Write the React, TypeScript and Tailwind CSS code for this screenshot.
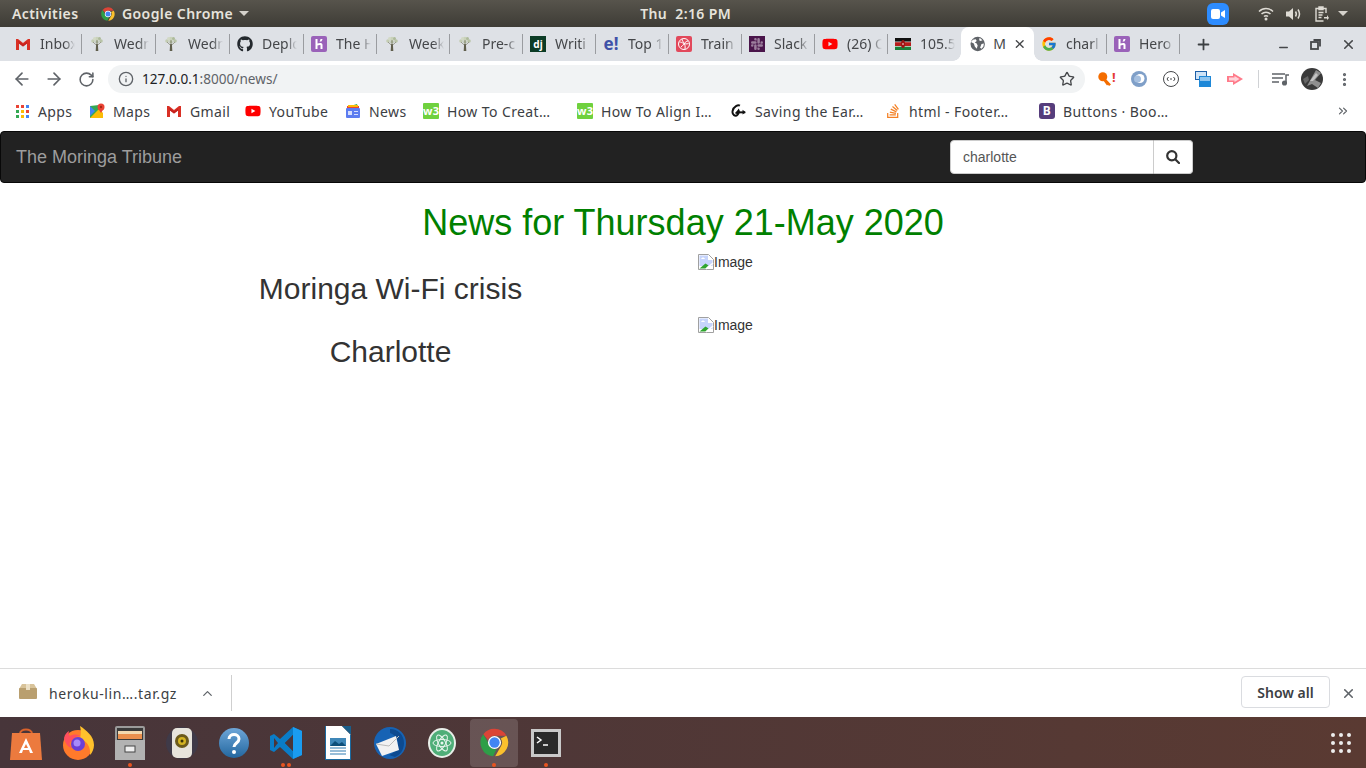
import React from 'react';
import { FaGithub, FaYoutube, FaStackOverflow } from 'react-icons/fa';
import { FcGoogle } from 'react-icons/fc';
import { SiSlack } from 'react-icons/si';
import { ArrowLeft, ArrowRight, RotateCw, Info, Star, Plus, X, Minus, ChevronUp, ChevronsRight, EllipsisVertical } from 'lucide-react';

const ui = { fontFamily: '"Noto Sans", "Open Sans", sans-serif' };

const ChromeLogo: React.FC<{ size: number }> = ({ size }) => (
  <svg width={size} height={size} viewBox="0 0 48 48">
    <path d="M24 4a20 20 0 0 1 17.3 10H24a10 10 0 0 0-9.4 6.6L7.7 12A20 20 0 0 1 24 4z" fill="#db4437" />
    <path d="M41.3 14A20 20 0 0 1 25 44l8.6-15A10 10 0 0 0 33 18z" fill="#fbc02d" />
    <path d="M7.7 12l8.6 15A10 10 0 0 0 27 33.6L22 44A20 20 0 0 1 7.7 12z" fill="#2e9e48" />
    <circle cx="24" cy="24" r="9.5" fill="#fff" />
    <circle cx="24" cy="24" r="7.5" fill="#4285f4" />
  </svg>
);

const GmailIcon = () => (
  <svg width="16" height="16" viewBox="0 0 16 16">
    <path d="M1 3h2l5 4 5-4h2v11h-3V7.500L8 10.500 4 7.500V14H1z" fill="#d93025" />
    <path d="M4 7.500L8 10.500l4-3V5.400L8 8.400 3 4.500z" fill="#c5221f" />
  </svg>
);

const TreeIcon = () => (
  <svg width="16" height="16" viewBox="0 0 16 16">
    <circle cx="4" cy="5" r="1.800" fill="#c3ccb2" />
    <circle cx="12" cy="5" r="1.800" fill="#b9c4a8" />
    <circle cx="8" cy="3" r="2.200" fill="#c9d2ba" />
    <circle cx="5.500" cy="2.500" r="1.500" fill="#d2d9c5" />
    <circle cx="10.500" cy="2.500" r="1.500" fill="#aebb9b" />
    <circle cx="8" cy="6" r="1.600" fill="#a9b596" />
    <path d="M4 6l3.200 3M12 6L8.800 9M8 4v4" stroke="#8a8c78" strokeWidth=".8" />
    <path d="M7.100 8h1.800l.4 7H6.700z" fill="#5f5e4c" />
  </svg>
);

const HerokuIcon = () => (
  <svg width="16" height="16" viewBox="0 0 16 16">
    <rect width="16" height="16" rx="2" fill="#9a62b9" />
    <path d="M4.500 3h2v4.500c1.500-.6 5-1.400 5 1.500v4h-2V9.500c0-1-2-.4-3 0V13h-2z" fill="#fff" />
    <path d="M9.500 3h2c-.1 1-.5 1.800-1.200 2.500H8.500c.5-.7 1-1.500 1-2.500z" fill="#fff" />
  </svg>
);

const DjangoIcon = () => (
  <div className="w-4 h-4 bg-[#0c3c26] text-white text-[10px] font-bold leading-4 text-center">dj</div>
);

const EBangIcon = () => (
  <div className="w-4 h-4 text-[#3f51a8] text-[17px] font-bold leading-4 text-center">e!</div>
);

const SoloIcon = () => (
  <svg width="16" height="16" viewBox="0 0 16 16">
    <rect width="16" height="16" rx="2" fill="#e2495c" />
    <circle cx="8" cy="8" r="5.500" fill="none" stroke="#fff" strokeWidth="1" />
    <path d="M3.500 6c3 0 5 3 9 1.500M6 3c0 3 4 4 3 10M12 5c-3 0-4 4-7 6" fill="none" stroke="#fff" strokeWidth="1" />
  </svg>
);

const SlackIcon = () => (
  <div className="w-4 h-4 bg-[#4a154b] flex items-center justify-center">
    <SiSlack size={12} color="#9c7f9d" />
  </div>
);

const KenyaFlag = () => (
  <svg width="16" height="16" viewBox="0 0 16 16">
    <rect y="2" width="16" height="4" fill="#111" />
    <rect y="6" width="16" height="4.500" fill="#b71c1c" />
    <rect y="10" width="16" height="4" fill="#1b7f3a" />
    <rect y="5.600" width="16" height=".6" fill="#fff" />
    <rect y="10" width="16" height=".6" fill="#fff" />
    <ellipse cx="8" cy="8" rx="2" ry="4" fill="#9c1414" />
    <circle cx="8" cy="8" r=".8" fill="#fff" />
  </svg>
);

const GlobeIcon = () => (
  <svg width="16" height="16" viewBox="0 0 16 16">
    <circle cx="8" cy="8" r="7.500" fill="#5f6368" />
    <path d="M3 3.500L6 3l1 2-2 1.500 2 1 1 2-1 3.500-2-2.500-1-3L1 6zM10 1.500l3 2.500-2 1-1.500-1zM12 8l2.500-.5-.5 3-2 2.500-1.500-1z" fill="#fff" />
  </svg>
);

const W3Icon = () => (
  <div className="w-4 h-4 rounded-[1px] bg-[#6fd13e] text-white text-[11px] font-bold leading-[15px] text-center overflow-hidden">w3</div>
);

const AppsIcon = () => (
  <div className="grid grid-cols-3 gap-[2px] w-[13px]">
    {['#ea4335', '#ea4335', '#4285f4', '#34a853', '#fbbc05', '#ea4335', '#34a853', '#fbbc05', '#4285f4'].map((c, i) => (
      <svg key={i} width="3" height="3" viewBox="0 0 3 3">
        <rect width="3" height="3" fill={c} />
      </svg>
    ))}
  </div>
);

const MapsIcon = () => (
  <svg width="16" height="16" viewBox="0 0 16 16">
    <path d="M1 3l9-1v13H1z" fill="#34a853" />
    <path d="M1 15L10 6l4 4v5z" fill="#fbbc05" />
    <path d="M1 3l5 5-5 5z" fill="#4285f4" />
    <circle cx="12" cy="4" r="3.500" fill="#ea4335" />
    <path d="M9.500 6l2.500 4 2.500-4z" fill="#ea4335" />
    <circle cx="12" cy="4" r="1.200" fill="#a52714" />
  </svg>
);

const NewsIcon = () => (
  <svg width="16" height="16" viewBox="0 0 16 16">
    <path d="M2 4l10-3 1 3z" fill="#34a853" />
    <rect x="2" y="3" width="12" height="3" fill="#ea4335" />
    <rect x="3" y="2" width="10" height="2" fill="#fbbc05" />
    <rect x="1" y="5" width="14" height="10" rx="1" fill="#5c7cf0" />
    <rect x="3" y="8" width="4" height="4" fill="#d6defc" />
    <rect x="9" y="8" width="4" height="1" fill="#d6defc" />
    <rect x="9" y="11" width="4" height="1" fill="#d6defc" />
  </svg>
);

const SavingIcon = () => (
  <svg width="18" height="16" viewBox="0 0 18 16" fill="none" stroke="#111" strokeWidth="2.200">
    <path d="M10 2C8 .8 3 2.500 1.800 8c-.8 4 3 7 5.700 4 1.200-1.500 1.500-3.500 1-4.500-.6 1-2.500 2-3 3.500" />
    <path d="M7 9.500h9" />
    <path d="M13 6.500l3.500 3-3.500 2.500z" fill="#111" stroke="none" />
  </svg>
);

const BootstrapIcon = () => (
  <div className="w-4 h-4 rounded-[3px] bg-[#563d7c] text-white text-[12px] font-bold leading-4 text-center">B</div>
);

type TabItem = { icon: React.ReactNode; title: string; width: string };

const tabs: TabItem[] = [
  { icon: <GmailIcon />, title: 'Inbox', width: 'w-[74px]' },
  { icon: <TreeIcon />, title: 'Wedn', width: 'w-[74px]' },
  { icon: <TreeIcon />, title: 'Wedn', width: 'w-[74px]' },
  { icon: <FaGithub size={16} color="#24292e" />, title: 'Deplo', width: 'w-[74px]' },
  { icon: <HerokuIcon />, title: 'The H', width: 'w-[73px]' },
  { icon: <TreeIcon />, title: 'Week', width: 'w-[73px]' },
  { icon: <TreeIcon />, title: 'Pre-c', width: 'w-[73px]' },
  { icon: <DjangoIcon />, title: 'Writi', width: 'w-[73px]' },
  { icon: <EBangIcon />, title: 'Top 1', width: 'w-[73px]' },
  { icon: <SoloIcon />, title: 'Train', width: 'w-[73px]' },
  { icon: <SlackIcon />, title: 'Slack', width: 'w-[73px]' },
  { icon: <FaYoutube size={16} color="#ff0000" />, title: '(26) C', width: 'w-[73px]' },
  { icon: <KenyaFlag />, title: '105.5', width: 'w-[73px]' },
];

const Tab: React.FC<{ item: TabItem; showSep?: boolean }> = ({ item, showSep = true }) => (
  <div className={`${item.width} h-full flex items-center pl-[7px] shrink-0`}>
    <div className="w-4 flex justify-center shrink-0">{item.icon}</div>
    <span className="ml-[9px] mb-[2px] w-[35px] overflow-hidden whitespace-nowrap text-[14px] text-[#45474a] [mask-image:linear-gradient(to_right,black_70%,transparent)]">
      {item.title}
    </span>
    {showSep && <div className="ml-auto w-px h-5 bg-[#9a9ca0]" />}
  </div>
);

const bookmarks = [
  { icon: <AppsIcon />, label: 'Apps', width: 'w-[75px]' },
  { icon: <MapsIcon />, label: 'Maps', width: 'w-[77px]' },
  { icon: <GmailIcon />, label: 'Gmail', width: 'w-[79px]' },
  { icon: <FaYoutube size={16} color="#ff0000" />, label: 'YouTube', width: 'w-[100px]' },
  { icon: <NewsIcon />, label: 'News', width: 'w-[78px]' },
  { icon: <W3Icon />, label: 'How To Creat…', width: 'w-[154px]' },
  { icon: <W3Icon />, label: 'How To Align I…', width: 'w-[154px]' },
  { icon: <SavingIcon />, label: 'Saving the Ear…', width: 'w-[154px]' },
  { icon: <FaStackOverflow size={16} color="#f48024" />, label: 'html - Footer…', width: 'w-[154px]' },
  { icon: <BootstrapIcon />, label: 'Buttons · Boo…', width: 'w-[150px]' },
];

const TopBar = () => (
  <div
    className="h-[27px] flex items-center bg-gradient-to-b from-[#57544c] to-[#3e3c36] text-[#e6e3dc] text-[14px] font-semibold tracking-[0.4px] px-3 shrink-0"
    style={ui}
  >
    <span className="w-[88px]">Activities</span>
    <ChromeLogo size={16} />
    <span className="ml-[6px]">Google Chrome</span>
    <div className="ml-[6px] w-0 h-0 border-x-[5px] border-x-transparent border-t-[5px] border-t-[#d5d2cb]" />
    <div className="ml-[391px] w-[180px]">Thu&nbsp;&nbsp;2:16 PM</div>
    <div className="ml-[387px] w-[22px] h-[22px] rounded-[6px] bg-[#2d8cff] flex items-center justify-center">
      <svg width="14" height="10" viewBox="0 0 14 10">
        <rect width="9" height="10" rx="2" fill="#fff" />
        <path d="M10 3.500L14 1v8l-4-2.500z" fill="#fff" />
      </svg>
    </div>
    <svg width="16" height="14" viewBox="0 0 16 14" className="ml-[29px]" fill="none" stroke="#dedbd4" strokeWidth="1.500">
      <path d="M1 4.500c4-4 10-4 14 0M3.500 7c2.500-2.500 6.500-2.500 9 0M6 9.500c1-1 3-1 4 0" />
      <circle cx="8" cy="12" r="1.500" fill="#dedbd4" stroke="none" />
    </svg>
    <svg width="16" height="14" viewBox="0 0 16 14" className="ml-[12px]" fill="none" stroke="#dedbd4" strokeWidth="1.500">
      <path d="M0 4.500h3L7 1v12L3 9.500H0z" fill="#dedbd4" stroke="none" />
      <path d="M9.500 4.500c1 1.500 1 3.500 0 5M12 2.500c2 3 2 6 0 9" />
    </svg>
    <svg width="14" height="16" viewBox="0 0 14 16" className="ml-[13px]" fill="none" stroke="#dedbd4" strokeWidth="1.400">
      <path d="M8.500 15H1V2.500h10V7" />
      <path d="M4 1h4v2.500H4z" fill="#dedbd4" />
      <path d="M3.500 6.500h5M3.500 9h4M3.500 11.500h3" />
      <path d="M9 13h3v-2l2 3-2 2v-1.500H9z" fill="#dedbd4" stroke="none" transform="translate(0 -2)" />
    </svg>
    <div className="ml-[9px] w-0 h-0 border-x-[5px] border-x-transparent border-t-[5px] border-t-[#d5d2cb]" />
  </div>
);

const TabStrip = () => (
  <div className="h-[34px] bg-[#dee1e6] flex items-center pl-2 shrink-0" style={ui}>
    {tabs.map((t, i) => (
      <Tab key={i} item={t} showSep={i !== 12} />
    ))}
    <div className="relative w-[73px] h-full bg-white rounded-t-lg flex items-center pl-[9px] shrink-0">
      <div className="absolute bottom-0 -left-2 w-2 h-2 bg-[radial-gradient(circle_at_0_0,#dee1e6_7.5px,white_8px)]" />
      <div className="absolute bottom-0 -right-2 w-2 h-2 bg-[radial-gradient(circle_at_100%_0,#dee1e6_7.5px,white_8px)]" />
      <GlobeIcon />
      <span className="ml-2 mb-[2px] text-[14px] text-[#45474a] w-[20px] overflow-hidden">M</span>
      <X size={14} className="ml-auto mr-2 text-[#45474a]" strokeWidth={2.500} />
    </div>
    <Tab item={{ icon: <FcGoogle size={16} />, title: 'charl', width: 'w-[73px]' }} />
    <Tab item={{ icon: <HerokuIcon />, title: 'Hero', width: 'w-[73px]' }} />
    <Plus size={17} className="ml-[15px] text-[#3c4043]" strokeWidth={2.500} />
    <Minus size={13} className="ml-[65px] mt-[6px] text-[#45474a]" strokeWidth={2.500} />
    <svg width="11" height="11" viewBox="0 0 11 11" className="ml-[20px] text-[#45474a]" fill="none" stroke="currentColor" strokeWidth="1.800">
      <rect x="1" y="3" width="7" height="7" />
      <path d="M3.500 1H10v6.500" />
    </svg>
    <X size={15} className="ml-[20px] text-[#45474a]" strokeWidth={2.500} />
  </div>
);

const Toolbar = () => (
  <div className="h-[36px] bg-white flex items-center pl-[12px] shrink-0" style={ui}>
    <ArrowLeft size={20} className="text-[#5f6368]" strokeWidth={2} />
    <ArrowRight size={20} className="ml-[12px] text-[#5f6368]" strokeWidth={2} />
    <RotateCw size={17} className="ml-[14px] text-[#5f6368]" strokeWidth={2.200} />
    <div className="ml-[13px] w-[977px] h-7 rounded-full bg-[#f1f3f4] flex items-center pl-[10px] pr-[10px]">
      <Info size={16} className="text-[#5f6368]" strokeWidth={2} />
      <span className="ml-[8px] text-[13.600px] text-[#202124]">
        127.0.0.1<span className="text-[#5f6368]">:8000/news/</span>
      </span>
      <Star size={16} className="ml-auto text-[#45474a]" strokeWidth={2} />
    </div>
    <div className="ml-[13px] flex items-center text-[#f46d00] font-bold text-[13px]">
      <svg width="14" height="15" viewBox="0 0 14 15">
        <circle cx="4.800" cy="4.800" r="4.500" fill="#f46d00" />
        <path d="M7 6l6 6.500-2 1.500-1-1.200-1 .7L5 8z" fill="#f46d00" />
      </svg>
      <span className="text-[#e53935] text-[13px] leading-none -mt-1">!</span>
    </div>
    <svg width="16" height="16" viewBox="0 0 16 16" className="ml-[15px]">
      <circle cx="8" cy="8" r="8" fill="#7f9fc8" />
      <circle cx="9" cy="7.500" r="4.500" fill="#fff" />
      <circle cx="6.500" cy="8" r="3.500" fill="#a5bfdf" />
    </svg>
    <svg width="16" height="16" viewBox="0 0 16 16" className="ml-[16px]" fill="none" stroke="#45474a" strokeWidth="1">
      <circle cx="8" cy="8" r="7.500" />
      <path d="M5.500 6L4 8l1.500 2M10.500 6L12 8l-1.500 2M7 8h2" />
    </svg>
    <svg width="16" height="16" viewBox="0 0 16 16" className="ml-[16px]">
      <rect x="0" y="0" width="12" height="9" fill="#1d5fa8" />
      <rect x="1" y="1" width="10" height="7" fill="#cfe3f6" />
      <rect x="4" y="5" width="12" height="11" fill="#1e88d8" />
      <rect x="5" y="6" width="10" height="4" fill="#8fc4ee" />
    </svg>
    <svg width="16" height="14" viewBox="0 0 16 14" className="ml-[16px]">
      <path d="M0 4h6V1l10 6-10 6V10H0z" fill="#ff7b8a" />
      <path d="M2 5.500h5.500V4l5 3-5 3V8.500H2z" fill="#ffd4da" />
    </svg>
    <div className="ml-[15px] w-px h-[18px] bg-[#d0d2d5]" />
    <svg width="18" height="14" viewBox="0 0 18 14" className="ml-[13px]" fill="none" stroke="#5f6368" strokeWidth="1.500">
      <path d="M0 2h13M0 6h11M0 10h7" />
      <path d="M14 11V3h3" />
      <circle cx="12.500" cy="11" r="1.800" fill="#5f6368" />
    </svg>
    <svg width="22" height="22" viewBox="0 0 22 22" className="ml-[11px]">
      <circle cx="11" cy="11" r="11" fill="#3a3a3a" />
      <path d="M6 18L15 2l5 3-6 7 6 3-3 5-6-4z" fill="#8f8f8f" />
      <path d="M9 13l6-8 2 2-5 6z" fill="#c4c4c4" />
      <path d="M2 11l5-3 1 4-4 4z" fill="#666" />
    </svg>
    <EllipsisVertical size={17} className="ml-[13px] text-[#5f6368]" strokeWidth={2.500} />
  </div>
);

const BookmarksBar = () => (
  <div className="h-[34px] pb-[6px] bg-white flex items-center pl-[14px] shrink-0 text-[14px] tracking-[0.4px] text-[#3c4043]" style={ui}>
    {bookmarks.map((b, i) => (
      <div key={i} className={`${b.width} flex items-center shrink-0`}>
        <div className="w-4 flex justify-center shrink-0">{b.icon}</div>
        <span className="ml-2 whitespace-nowrap">{b.label}</span>
      </div>
    ))}
    <ChevronsRight size={14} className="ml-auto mr-4 text-[#5f6368]" strokeWidth={2} />
  </div>
);

const Navbar = () => (
  <nav
    className="h-[52px] bg-[#222] border border-[#080808] rounded flex items-center shrink-0"
    style={{ fontFamily: '"Liberation Sans", Arial, sans-serif' }}
  >
    <a className="ml-[15px] text-lg text-[#9d9d9d] w-[934px]">The Moringa Tribune</a>
    <div className="flex h-[34px] w-[243px]">
      <input
        readOnly
        value="charlotte"
        className="w-[204px] bg-white rounded-l border border-[#ccc] px-3 text-sm text-[#555] outline-none"
      />
      <button className="flex-1 bg-white rounded-r border border-l-0 border-[#ccc] flex items-center justify-center">
        <svg width="14" height="14" viewBox="0 0 14 14" fill="none" stroke="#333" strokeWidth="2.200">
          <circle cx="5.800" cy="5.800" r="4.600" />
          <path d="M9.200 9.200L13 13" strokeLinecap="round" />
        </svg>
      </button>
    </div>
  </nav>
);

const BrokenImage = () => (
  <div className="flex items-center text-sm text-[#333] h-5">
    <svg width="16" height="16" viewBox="0 0 16 16">
      <path d="M.5.500h10l5 5v10H.5z" fill="#fff" stroke="#a0a0a0" />
      <path d="M1.500 1.500h8.500v4.500h4.500v6H1.500z" fill="#c6d4fb" />
      <path d="M1.500 14.500l6-5 3 2-3 3z" fill="#2fa52f" />
      <path d="M3 5c1-2 3-2 4 0z" fill="#fff" />
      <path d="M8 15l7-6" stroke="#fff" strokeWidth="1.500" />
    </svg>
    <span>Image</span>
  </div>
);

const NewsRow: React.FC<{ title: string }> = ({ title }) => (
  <div className="flex h-[63px]">
    <div className="w-[585px] px-[15px] text-center">
      <h2 className="mt-5 text-[30px] leading-[33px] text-[#333]">{title}</h2>
    </div>
    <div className="w-[585px] px-[15px]">
      <BrokenImage />
    </div>
  </div>
);

const Content = () => (
  <main className="flex-1 min-h-0 bg-white" style={{ fontFamily: '"Liberation Sans", Arial, sans-serif' }}>
    <h1 className="mt-5 text-center text-4xl leading-[40px] text-[#008000]">News for Thursday 21-May 2020</h1>
    <div className="w-[1170px] mx-auto mt-[9px]">
      <NewsRow title="Moringa Wi-Fi crisis" />
      <NewsRow title="Charlotte" />
    </div>
  </main>
);

const DownloadBar = () => (
  <div className="h-[49px] bg-white border-t border-[#dcdcdc] flex items-center shrink-0 text-[#3c4043]" style={ui}>
    <svg width="18" height="16" viewBox="0 0 18 16" className="ml-[19px] mb-[2px]">
      <path d="M3 0h12l3 5H0z" fill="#d8c39a" />
      <rect y="4" width="18" height="11" rx="1" fill="#b99f6f" />
      <rect x="7" y="0" width="4" height="6" fill="#ece0c6" />
    </svg>
    <span className="ml-[12px] w-[150px] text-[14px] tracking-[0.6px] whitespace-nowrap">heroku-lin….tar.gz</span>
    <ChevronUp size={15} className="ml-px text-[#5f6368]" strokeWidth={2} />
    <div className="ml-[16px] w-px h-[36px] bg-[#cfcfcf]" />
    <button className="ml-auto mb-[2px] w-[89px] h-8 rounded border border-[#dadce0] text-[14px] font-semibold text-[#3c4043]">
      Show all
    </button>
    <X size={15} className="ml-[11px] mr-[10px] text-[#5f6368]" strokeWidth={2.500} />
  </div>
);

const dockIcons: { el: React.ReactNode; dots?: number; active?: boolean }[] = [
  {
    el: (
      <svg width="32" height="34" viewBox="0 0 32 34">
        <path d="M10 8c0-6 12-6 12 0" fill="none" stroke="#d9622b" strokeWidth="2" />
        <path d="M2 7h28l2 27H0z" fill="#ec7a3e" />
        <path d="M16 12l7 15h-3l-1-3h-6l-1 3H9zm0 6l-2 4h4z" fill="#fff" />
      </svg>
    ),
  },
  {
    el: (
      <svg width="32" height="34" viewBox="0 0 32 34">
        <circle cx="16" cy="19" r="15" fill="#ff7a2b" />
        <path d="M18 0c6 4 14 10 14 19 0 4-2 8-4 10 1-8-3-14-10-16 1-5 1-9 0-13z" fill="#ffc12c" />
        <path d="M2 12c1-4 3-6 5-7-1 3 0 4 1 5 3-2 7-2 10 0-4 0-6 2-6 4l-4 2c-1 2 0 5 3 6-5 0-8-5-9-10z" fill="#ff4f5e" />
        <circle cx="16" cy="18" r="7" fill="#6b3fd4" />
        <circle cx="15" cy="17" r="3.500" fill="#a78bfa" />
      </svg>
    ),
  },
  {
    el: (
      <svg width="30" height="34" viewBox="0 0 30 34">
        <rect width="30" height="34" rx="2" fill="#9b9b9b" />
        <rect x="2" y="2" width="26" height="12" fill="#3a3a3a" />
        <rect x="3" y="5" width="24" height="3" fill="#f2d8b0" />
        <rect x="3" y="8" width="24" height="5" fill="#e98f4e" />
        <rect x="0" y="14" width="30" height="20" fill="#b2b2b2" />
        <rect x="10" y="20" width="10" height="6" fill="#eee" stroke="#444" />
      </svg>
    ),
    dots: 1,
  },
  {
    el: (
      <svg width="32" height="34" viewBox="0 0 32 34">
        <circle cx="16" cy="17" r="16" fill="#3f3a48" />
        <rect x="6" y="2" width="20" height="30" rx="5" fill="#e7e4dc" />
        <circle cx="16" cy="15" r="7" fill="#6b5a1c" />
        <circle cx="16" cy="15" r="4" fill="#d4b422" />
        <circle cx="16" cy="15" r="1.500" fill="#3b3208" />
      </svg>
    ),
  },
  {
    el: (
      <svg width="32" height="32" viewBox="0 0 32 32">
        <defs>
          <linearGradient id="helpFill" x1="0" y1="0" x2="0" y2="1">
            <stop offset="0" stopColor="#6ea6d8" />
            <stop offset="1" stopColor="#23679f" />
          </linearGradient>
        </defs>
        <circle cx="16" cy="16" r="15" fill="url(#helpFill)" />
        <path d="M11 12c0-6 10-6 10 0 0 4-5 4-5 8" fill="none" stroke="#fff" strokeWidth="3" />
        <circle cx="16" cy="25" r="2" fill="#fff" />
      </svg>
    ),
  },
  {
    el: (
      <svg width="32" height="32" viewBox="0 0 32 32">
        <path d="M23 0l9 4v24l-9 4-13-12-6 5-4-2V9l4-2 6 5z" fill="#0a7cc7" />
        <path d="M23 8l-8 8 8 8z" fill="#4a3539" />
        <path d="M4 11v10l4-5z" fill="#4a3539" />
        <path d="M23 0l9 4v24l-9 4z" fill="#1a9cf0" />
        <path d="M23 8l-8 8 8 8z" fill="#4a3539" />
      </svg>
    ),
    dots: 2,
  },
  {
    el: (
      <svg width="26" height="34" viewBox="0 0 26 34">
        <path d="M0 0h17l9 9v25H0z" fill="#fff" />
        <path d="M17 0h9v9z" fill="#1a5e8a" />
        <path d="M0 0h1v34H0zM25 9h1v25h-1zM0 33h26v1H0z" fill="#1a6aa0" />
        <rect x="5" y="12" width="16" height="8" fill="#3f87b8" />
        <path d="M5 20l5-5 4 3 3-2 4 4z" fill="#0e4f7a" />
        <path d="M5 22h16M5 25h16M5 28h16" stroke="#76a8cc" strokeWidth="1.500" />
      </svg>
    ),
  },
  {
    el: (
      <svg width="32" height="34" viewBox="0 0 32 34">
        <circle cx="16" cy="17" r="16" fill="#1763b4" />
        <path d="M16 3c8 0 14 6 14 14 0 7-4 12-9 14l-6-2c5-2 9-6 9-11 0-5-3-9-8-11z" fill="#0d4a90" />
        <path d="M2 18L22 10l3 14-17 6z" fill="#f2f2f2" />
        <path d="M2 18l13 2 10-10" fill="none" stroke="#bbb" strokeWidth="1" />
      </svg>
    ),
  },
  {
    el: (
      <svg width="28" height="30" viewBox="0 0 28 30">
        <ellipse cx="14" cy="15" rx="14" ry="15" fill="#e9efe9" />
        <ellipse cx="14" cy="15" rx="12" ry="13" fill="#4fae78" />
        <g fill="none" stroke="#e9f5ee" strokeWidth="1">
          <ellipse cx="14" cy="15" rx="9" ry="3.500" transform="rotate(60 14 15)" />
          <ellipse cx="14" cy="15" rx="9" ry="3.500" transform="rotate(-60 14 15)" />
          <ellipse cx="14" cy="15" rx="9" ry="3.500" />
        </g>
        <circle cx="14" cy="15" r="1.500" fill="#e9f5ee" />
      </svg>
    ),
  },
  { el: <ChromeLogo size={33} />, active: true, dots: 1 },
  {
    el: (
      <svg width="30" height="28" viewBox="0 0 30 28">
        <rect width="30" height="28" fill="#c9c9c9" />
        <rect x="3" y="3" width="24" height="22" fill="#2a2a2a" />
        <path d="M6 8l4 3-4 3" fill="none" stroke="#fff" strokeWidth="1.500" />
        <path d="M12 16h5" stroke="#fff" strokeWidth="1.500" />
      </svg>
    ),
    dots: 1,
  },
];

const Dock = () => (
  <div className="h-[51px] flex items-center bg-gradient-to-r from-[#47353a] to-[#5a3a32] shrink-0">
    {dockIcons.map((d, i) => (
      <div key={i} className="relative w-[52px] h-full flex items-center justify-center shrink-0">
        {d.active && <div className="absolute left-[2px] right-[2px] top-[2px] bottom-[1px] rounded bg-white/15" />}
        <div className="relative">{d.el}</div>
        {d.dots ? (
          <div className="absolute bottom-[1px] left-0 right-0 flex justify-center gap-[2px]">
            {Array.from({ length: d.dots }).map((_, j) => (
              <div key={j} className="w-1 h-1 rounded-full bg-[#e95420]" />
            ))}
          </div>
        ) : null}
      </div>
    ))}
    <div className="ml-auto mr-[15px] grid grid-cols-3 gap-[4px]">
      {Array.from({ length: 9 }).map((_, i) => (
        <div key={i} className="w-1 h-1 rounded-full bg-[#eee]" />
      ))}
    </div>
  </div>
);

export default function App() {
  return (
    <div className="h-screen w-full flex flex-col overflow-hidden bg-white">
      <TopBar />
      <TabStrip />
      <Toolbar />
      <BookmarksBar />
      <Navbar />
      <Content />
      <DownloadBar />
      <Dock />
    </div>
  );
}
